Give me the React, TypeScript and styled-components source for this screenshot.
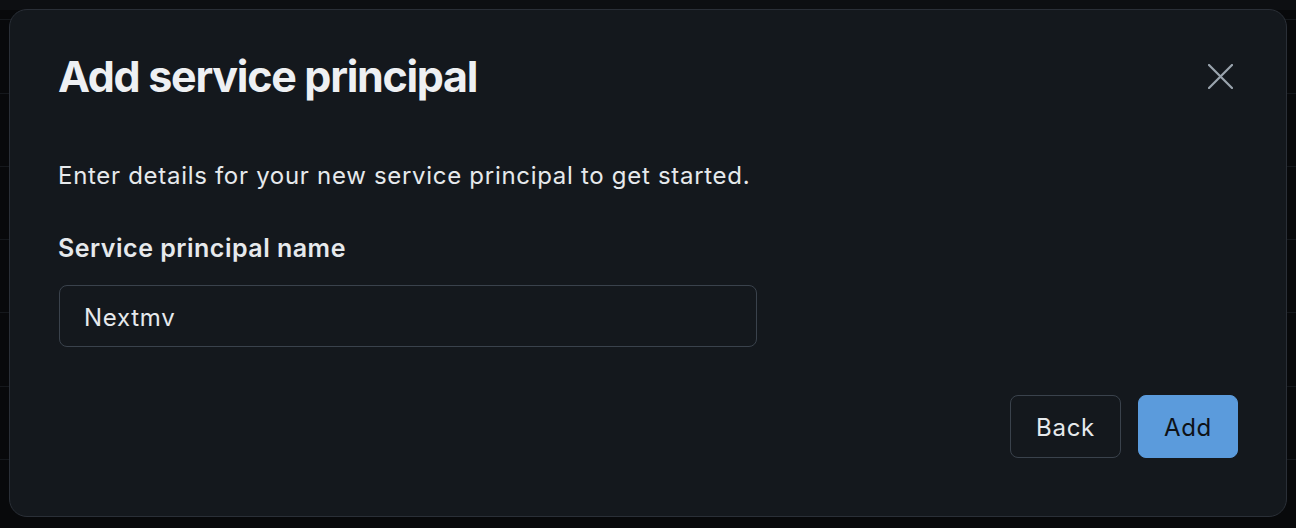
import React from "react";
import styled, { createGlobalStyle } from "styled-components";

const Global = createGlobalStyle`
  html, body { margin: 0; padding: 0; background: #08090b; }
  body { font-family: Inter, "Noto Sans", "Liberation Sans", sans-serif; -webkit-font-smoothing: antialiased; }
  * { box-sizing: border-box; }
`;

const Page = styled.div`
  position: relative;
  width: 1296px;
  height: 528px;
  overflow: hidden;
  background: #08090b;
`;

const TopBand = styled.div`
  height: 10px;
  background: #0d0f12;
`;

const BgRows = styled.div`
  display: flex;
  flex-direction: column;
`;

const BgRow = styled.div<{ $h: number }>`
  height: ${(p) => p.$h}px;
  border-bottom: 1px solid #15181c;
`;

const Overlay = styled.div`
  position: absolute;
  inset: 0;
  padding: 9px 9px 11px 9px;
  display: flex;
`;

const Dialog = styled.div`
  flex: 1;
  background: #14181d;
  border: 1px solid #2a2f37;
  border-radius: 18px;
  padding: 40px 48px 58px 48px;
  display: flex;
  flex-direction: column;
`;

const Header = styled.div`
  display: flex;
  align-items: center;
  justify-content: space-between;
`;

const Title = styled.h2`
  margin: 0;
  font-size: 43px;
  line-height: 52px;
  font-weight: 700;
  color: #eef0f3;
  letter-spacing: -1.3px;
`;

const CloseButton = styled.button`
  background: none;
  border: none;
  padding: 0;
  margin-right: 4px;
  width: 28px;
  height: 28px;
  display: flex;
  align-items: center;
  justify-content: center;
  cursor: pointer;
  color: #9aa4ae;
`;

const Description = styled.p`
  margin: 56px 0 0 0;
  font-size: 24px;
  line-height: 36px;
  letter-spacing: 0.7px;
  color: #e6e9ec;
`;

const Label = styled.label`
  display: block;
  margin-top: 36px;
  font-size: 25px;
  line-height: 36px;
  font-weight: 600;
  letter-spacing: 0.5px;
  color: #e6e9ec;
`;

const Input = styled.input`
  margin: 19px 0 0 1px;
  width: 698px;
  height: 62px;
  background: transparent;
  border: 1.5px solid #3a424c;
  border-radius: 8px;
  padding: 3px 24px 0 24px;
  font-family: inherit;
  font-size: 24px;
  letter-spacing: 0.7px;
  color: #e6e9ec;
  outline: none;
`;

const Footer = styled.div`
  margin-top: auto;
  display: flex;
  justify-content: flex-end;
  gap: 17px;
`;

const Button = styled.button<{ $primary?: boolean }>`
  height: 63px;
  padding: 2px 25px 0 25px;
  border-radius: 8px;
  font-family: inherit;
  font-size: 24px;
  letter-spacing: 0.7px;
  font-weight: 400;
  cursor: pointer;
  border: 1.5px solid ${(p) => (p.$primary ? "#5b9bdc" : "#3a424c")};
  background: ${(p) => (p.$primary ? "#5b9bdc" : "transparent")};
  color: ${(p) => (p.$primary ? "#0e1217" : "#e6e9ec")};
`;

export default function App() {
  const rows = [10, 74, 73, 73, 73, 74, 73, 73];
  return (
    <Page>
      <Global />
      <TopBand />
      <BgRows>
        {rows.map((h, i) => (
          <BgRow key={i} $h={h} />
        ))}
      </BgRows>
      <Overlay>
        <Dialog role="dialog">
          <Header>
            <Title>Add service principal</Title>
            <CloseButton aria-label="Close">
              <svg width="25" height="25" viewBox="0 0 25 25" fill="none">
                <path d="M1 1L24 24M24 1L1 24" stroke="currentColor" strokeWidth="2.2" strokeLinecap="round" />
              </svg>
            </CloseButton>
          </Header>
          <Description>Enter details for your new service principal to get started.</Description>
          <Label htmlFor="sp-name">Service principal name</Label>
          <Input id="sp-name" defaultValue="Nextmv" />
          <Footer>
            <Button>Back</Button>
            <Button $primary>Add</Button>
          </Footer>
        </Dialog>
      </Overlay>
    </Page>
  );
}
